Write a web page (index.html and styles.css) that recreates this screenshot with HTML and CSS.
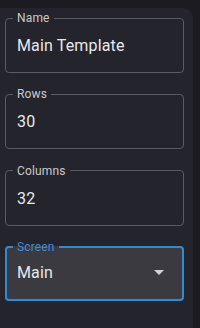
FILE: index.html
```html
<!DOCTYPE html>
<html lang="en">
<head>
    <meta charset="UTF-8">
    <meta name="viewport" content="width=device-width, initial-scale=1.0">
    <title>Template Settings</title>
    <link rel="stylesheet" href="styles.css">
</head>
<body>
    <div class="panel">
        <fieldset class="field">
            <legend>Name</legend>
            <div class="value">Main Template</div>
        </fieldset>
        <fieldset class="field">
            <legend>Rows</legend>
            <div class="value">30</div>
        </fieldset>
        <fieldset class="field">
            <legend>Columns</legend>
            <div class="value">32</div>
        </fieldset>
        <fieldset class="field select focused">
            <legend>Screen</legend>
            <div class="value">
                <span>Main</span>
                <svg class="arrow" width="10" height="5" viewBox="0 0 10 5">
                    <path d="M0 0 L10 0 L5 5 Z" fill="#d2d2d6"/>
                </svg>
            </div>
        </fieldset>
    </div>
</body>
</html>
```

FILE: styles.css
```css
* {
    box-sizing: border-box;
    margin: 0;
    padding: 0;
}

body {
    background: #1b1b21;
    font-family: Roboto, "Liberation Sans", sans-serif;
    width: 200px;
    height: 328px;
    overflow: hidden;
}

.panel {
    margin-top: 8px;
    width: 193px;
    height: 320px;
    background: #24242c;
    border-top-right-radius: 10px;
    padding: 3px 0 0 5px;
}

.field {
    width: 179px;
    border: 1px solid #5a5a62;
    border-radius: 4px;
    padding: 0 11px 17px 7px;
    margin-bottom: 14.4px;
    letter-spacing: 0.15px;
}

.field legend {
    font-size: 12px;
    line-height: 14px;
    padding: 0 4px;
    color: #c9c9ce;
}

.value {
    padding: 11px 0 0 4px;
    font-size: 16px;
    line-height: 19px;
    color: #e8e8ec;
}

.select {
    border: 2px solid #2f8bd6;
    background: #3b3a40;
    padding: 0 11px 17px 6px;
}

.select legend {
    color: #3a8fd8;
}

.select .value {
    display: flex;
    justify-content: space-between;
    align-items: center;
    padding-top: 9px;
}

.arrow {
    margin-right: 7px;
}
```
